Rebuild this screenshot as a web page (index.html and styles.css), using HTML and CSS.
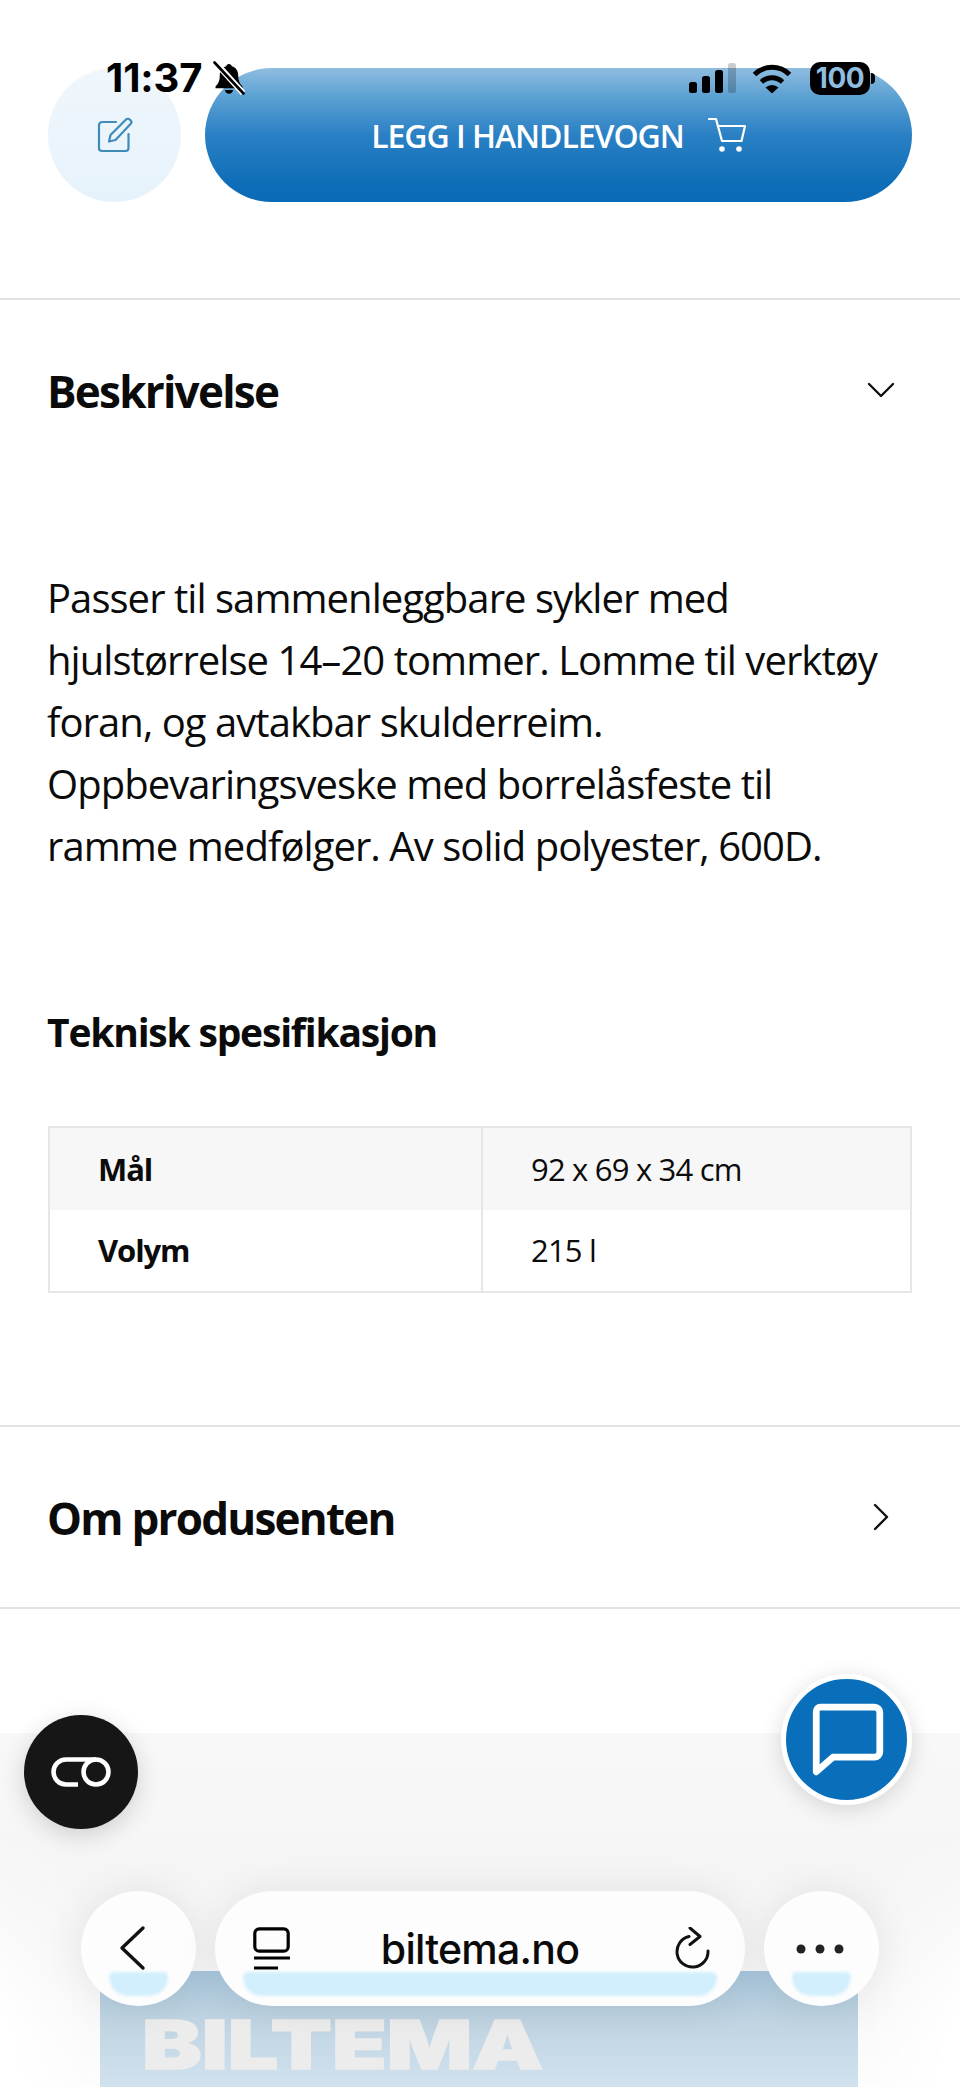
FILE: index.html
```html
<!DOCTYPE html>
<html lang="no">
<head>
<meta charset="utf-8">
<title>Biltema</title>
<link rel="stylesheet" href="styles.css">
</head>
<body>
<div class="page">
  <header class="status">
    <span class="time">11:37</span>
    <svg class="bell" viewBox="0 0 32 34"><path d="M16 3c-1.600 0-2.500 1-2.700 2.200C8.800 6.400 6.800 10 6.800 14.500c0 5-1.300 7.800-4.300 11v1.800h27v-1.800c-3-3.200-4.300-6-4.300-11 0-4.500-2-8.100-6.500-9.300C18.500 4 17.600 3 16 3zM11.800 29c.5 2.300 2.200 3.800 4.200 3.800s3.700-1.500 4.200-3.800z" fill="#000"/><path d="M2 1l28 31" stroke="#fff" stroke-width="6"/><path d="M1.500 1.500l29 31" stroke="#000" stroke-width="2.600" stroke-linecap="round"/></svg>
    <span class="status-gap"></span>
    <svg class="signal" viewBox="0 0 48 30"><rect x="1" y="19" width="8" height="11" rx="2.500" fill="#000"/><rect x="14" y="13" width="8" height="17" rx="2.500" fill="#000"/><rect x="27" y="7" width="8" height="23" rx="2.500" fill="#000"/><rect x="40" y="0" width="8" height="30" rx="2.500" fill="#000" opacity=".2"/></svg>
    <svg class="wifi" viewBox="0 0 40 30"><path d="M2.500 11.500a25 25 0 0 1 35 0M9.500 19a15 15 0 0 1 21 0" fill="none" stroke="#000" stroke-width="5"/><path d="M13.500 24.500a9.500 9.500 0 0 1 13 0L20 30.500z" fill="#000"/></svg>
    <span class="battery">100</span>
  </header>

  <section class="actions">
    <button class="round-action">
      <svg class="icon-note" viewBox="0 0 36 36"><path d="M19 5H5.500C3.500 5 2 6.500 2 8.500v23C2 33.500 3.500 34 5.500 34h23c2 0 3-1 3-3V17" fill="none" stroke="#3f8bba" stroke-width="2.200" stroke-linecap="round"/><path d="M12 24.500l1.500-6.500L29 2.500c1-1 2.700-1 3.700 0l.8.800c1 1 1 2.700 0 3.700L18.500 23z" fill="none" stroke="#3f8bba" stroke-width="2.200" stroke-linejoin="round"/></svg>
    </button>
    <button class="buy">
      <span>LEGG I HANDLEVOGN</span>
      <svg class="icon-cart" viewBox="0 0 38 36"><path d="M1 2h7l6 22h19M10 9h27l-3.500 15" fill="none" stroke="#fff" stroke-width="2.200" stroke-linecap="round" stroke-linejoin="round"/><circle cx="14" cy="32" r="2.800" fill="#fff"/><circle cx="31" cy="32" r="2.800" fill="#fff"/></svg>
    </button>
  </section>

  <section class="panel open">
    <div class="panel-head">
      <h2>Beskrivelse</h2>
      <svg class="chev-down" viewBox="0 0 30 18"><path d="M3 3l12 12L27 3" fill="none" stroke="#111" stroke-width="2.400" stroke-linecap="round" stroke-linejoin="round"/></svg>
    </div>
    <p class="lead">Passer til sammenleggbare sykler med hjulstørrelse 14–20 tommer. Lomme til verktøy foran, og avtakbar skulderreim. Oppbevaringsveske med borrelåsfeste til ramme medfølger. Av solid polyester, 600D.</p>
    <h3>Teknisk spesifikasjon</h3>
    <table class="spec">
      <tr><th>Mål</th><td>92 x 69 x 34 cm</td></tr>
      <tr><th>Volym</th><td>215 l</td></tr>
    </table>
  </section>

  <section class="panel closed">
    <div class="panel-head">
      <h2>Om produsenten</h2>
      <svg class="chev-right" viewBox="0 0 18 30"><path d="M3 3l12 12L3 27" fill="none" stroke="#111" stroke-width="2.400" stroke-linecap="round" stroke-linejoin="round"/></svg>
    </div>
  </section>

  <footer class="foot">
    <div class="brand"><span>BILTEMA</span></div>
  </footer>

  <button class="fab-dark">
    <svg viewBox="0 0 60 30"><path d="M27 27.500H15a12.500 12.500 0 0 1 0-25h30" fill="none" stroke="#fff" stroke-width="4.600"/><circle cx="45" cy="15" r="12.500" fill="none" stroke="#fff" stroke-width="4.600"/></svg>
  </button>
  <button class="fab-chat">
    <svg viewBox="0 0 72 72"><path d="M10 5h52c2.800 0 5 2.200 5 5v38c0 2.800-2.200 5-5 5H22L6 67V9c0-2.200 1.800-4 4-4z" fill="none" stroke="#fff" stroke-width="6.500" stroke-linejoin="round"/></svg>
  </button>

  <nav class="toolbar">
    <button class="tool-round">
      <svg class="icon-back" viewBox="0 0 28 46"><path d="M25 3L4 23l21 20" fill="none" stroke="#111" stroke-width="3.400" stroke-linecap="round" stroke-linejoin="round"/></svg>
      <i class="glow"></i>
    </button>
    <div class="address">
      <svg class="icon-tabs" viewBox="0 0 38 44"><rect x="1.800" y="1.800" width="33.400" height="22.400" rx="4.500" fill="none" stroke="#000" stroke-width="3.200"/><path d="M1 31h36M1 41h24" stroke="#000" stroke-width="3"/></svg>
      <span class="url">biltema.no</span>
      <svg class="icon-reload" viewBox="0 0 36 44"><path d="M14 9.500A15.500 15.500 0 1 0 33 24" fill="none" stroke="#111" stroke-width="3" stroke-linecap="round"/><path d="M15 1l10 8.500-10 8" fill="none" stroke="#111" stroke-width="3" stroke-linecap="round" stroke-linejoin="round"/></svg>
      <i class="glow"></i>
    </div>
    <button class="tool-round">
      <svg class="icon-more" viewBox="0 0 48 10"><circle cx="5" cy="5" r="4.500" fill="#222"/><circle cx="24" cy="5" r="4.500" fill="#222"/><circle cx="43" cy="5" r="4.500" fill="#222"/></svg>
      <i class="glow"></i>
    </button>
  </nav>
</div>
</body>
</html>
```

FILE: styles.css
```css
* { box-sizing: border-box; }

html, body {
  margin: 0;
  background: #fff;
}

.page {
  position: relative;
  width: 960px;
  height: 2087px;
  overflow: hidden;
  padding-top: 68px;
  font-family: "Open Sans", "Noto Sans", sans-serif;
  color: #0b0b0b;
}

button {
  border: 0;
  padding: 0;
  font: inherit;
}

/* System status line */
.status {
  position: absolute;
  top: 61px;
  left: 106px;
  width: 769px;
  height: 34px;
  display: flex;
  align-items: center;
  z-index: 5;
}

.time {
  font: 700 40px/34px Inter, sans-serif;
  letter-spacing: -.1px;
  color: #000;
}

.bell { width: 32px; height: 34px; margin-left: 11px; }
.status-gap { flex: 1; }
.signal { width: 48px; height: 30px; }
.wifi { width: 40px; height: 30px; margin-left: 16px; }

.battery {
  position: relative;
  width: 60px;
  height: 33px;
  margin-left: 18px;
  margin-right: 5px;
  border-radius: 10px;
  background: #000;
  color: #8fbcdf;
  font: 700 28px/33px Inter, sans-serif;
  letter-spacing: -.5px;
  text-align: center;
}

.battery::after {
  content: "";
  position: absolute;
  right: -5px;
  top: 11px;
  width: 4px;
  height: 11px;
  border-radius: 0 4px 4px 0;
  background: #000;
}

/* Purchase row */
.actions {
  display: flex;
  gap: 24px;
  padding: 0 48px;
  height: 232px;
  border-bottom: 2px solid #e2e2e2;
}

.round-action {
  flex: 0 0 133px;
  height: 134px;
  border-radius: 50%;
  background: linear-gradient(#f0f7fc, #e6f2fb);
  display: flex;
  align-items: center;
  justify-content: center;
}

.icon-note { width: 36px; height: 36px; margin-bottom: 1px; }

.buy {
  flex: 1;
  height: 134px;
  border-radius: 67px;
  background: linear-gradient(#8fbde0 0%, #5aa0d2 22%, #2a80c4 50%, #0f6eb8 85%, #0a6ab6 100%);
  color: #fff;
  font-size: 32px;
  font-weight: 600;
  letter-spacing: -1.050px;
  display: flex;
  align-items: center;
  justify-content: center;
  gap: 24px;
}

.icon-cart { width: 38px; height: 36px; }

/* Collapsible panels */
.panel {
  padding: 0 48px;
  border-bottom: 2px solid #e2e2e2;
}

.panel-head {
  display: flex;
  align-items: center;
  justify-content: space-between;
  padding-right: 16px;
}

.panel.open { height: 1127px; padding-top: 60px; }
.panel.closed { height: 182px; padding-top: 60px; }

h2 {
  margin: 0 0 0 -1px;
  font-size: 44px;
  line-height: 62px;
  font-weight: 700;
  letter-spacing: -1.750px;
}

.chev-down { width: 30px; height: 18px; margin-bottom: 3px; }
.chev-right { width: 18px; height: 30px; margin: 0 6px 3px 0; }

.lead {
  margin: 145px 0 0 -1px;
  width: 846px;
  font-size: 40px;
  line-height: 62px;
  letter-spacing: -.95px;
}

h3 {
  margin: 124px 0 0 -1px;
  font-size: 39px;
  line-height: 62px;
  font-weight: 700;
  letter-spacing: -1.200px;
}

.spec {
  width: 864px;
  margin-top: 63px;
  height: 167px;
  border-collapse: collapse;
  table-layout: fixed;
  border: 2px solid #e6e6e6;
  font-size: 31px;
  letter-spacing: -.8px;
}

.spec th, .spec td {
  padding: 0 48px;
  text-align: left;
  border-right: 2px solid #e6e6e6;
}

.spec th {
  width: 433px;
  font-weight: 700;
  letter-spacing: -1.100px;
}

.spec tr:first-child { background: #f7f7f7; }

/* Page foot with brand strip */
.foot {
  position: relative;
  height: 354px;
  margin-top: 124px;
  padding: 238px 102px 0 100px;
  background: linear-gradient(#f8f8f8 0, #f5f5f5 150px, #f6f6f6 230px, #fdfdfd 354px);
}

/* Side fade towards the screen edges in the lower part of the foot */
.foot::before {
  content: "";
  position: absolute;
  inset: 0;
  background: linear-gradient(90deg, #fff 0, rgba(255,255,255,0) 100px, rgba(255,255,255,0) 860px, #fff 960px);
  -webkit-mask-image: linear-gradient(rgba(0,0,0,0) 90px, #000 300px);
  mask-image: linear-gradient(rgba(0,0,0,0) 90px, #000 300px);
}

.brand {
  position: relative;
  height: 120px;
  padding: 40px 0 0 42px;
  background: linear-gradient(#a7c5db 0, #bfd3e1 40%, #d2e3ef 100%);
}

.brand span {
  display: inline-block;
  font: 900 68px/66px Inter, "Liberation Sans", sans-serif;
  color: #ececec;
  transform: scaleX(1.315);
  transform-origin: left center;
  -webkit-text-stroke: 1.500px #ececec;
}

/* Floating buttons */
.fab-dark {
  position: absolute;
  left: 24px;
  top: 1715px;
  width: 114px;
  height: 114px;
  border-radius: 50%;
  background: #161616;
  box-shadow: 0 6px 24px rgba(0,0,0,.16);
  display: flex;
  align-items: center;
  justify-content: center;
}

.fab-dark svg { width: 60px; height: 30px; }

.fab-chat {
  position: absolute;
  left: 781px;
  top: 1674px;
  width: 131px;
  height: 131px;
  border-radius: 50%;
  background: #0a6fba;
  border: 5px solid #fff;
  box-shadow: 0 4px 22px rgba(0,0,0,.14);
  display: flex;
  align-items: center;
  justify-content: center;
}

.fab-chat svg { width: 75px; height: 75px; margin: 0 0 1px 1px; }

/* Browser toolbar */
.toolbar {
  position: absolute;
  left: 81px;
  top: 1891px;
  width: 798px;
  height: 115px;
  display: flex;
  gap: 19px;
}

.tool-round, .address {
  position: relative;
  height: 115px;
  background: #fdfdfd;
  box-shadow: 0 0 40px rgba(0,0,0,.08);
}

.tool-round {
  flex: 0 0 115px;
  border-radius: 50%;
  display: flex;
  align-items: center;
  justify-content: center;
}

.icon-back { width: 28px; height: 46px; margin: 0 14px 0 0; position: relative; top: -1px; }
.icon-more { width: 48px; height: 10px; margin-right: 3px; }

.address {
  flex: 1;
  border-radius: 57px;
  display: flex;
  align-items: center;
  justify-content: space-between;
  padding: 0 34px 0 38px;
}

.icon-tabs { width: 38px; height: 44px; }
.icon-reload { width: 36px; height: 44px; }

.url {
  font: 500 41px/46px Inter, sans-serif;
  letter-spacing: -.75px;
  color: #0a0a0a;
  margin-right: 6px;
}

.glow {
  position: absolute;
  left: 28px;
  right: 28px;
  top: 81px;
  height: 24px;
  background: #d2effd;
  border-radius: 6px 6px 24px 24px;
  filter: blur(1.500px);
}

.address .glow { border-radius: 6px 6px 20px 20px; }
```
